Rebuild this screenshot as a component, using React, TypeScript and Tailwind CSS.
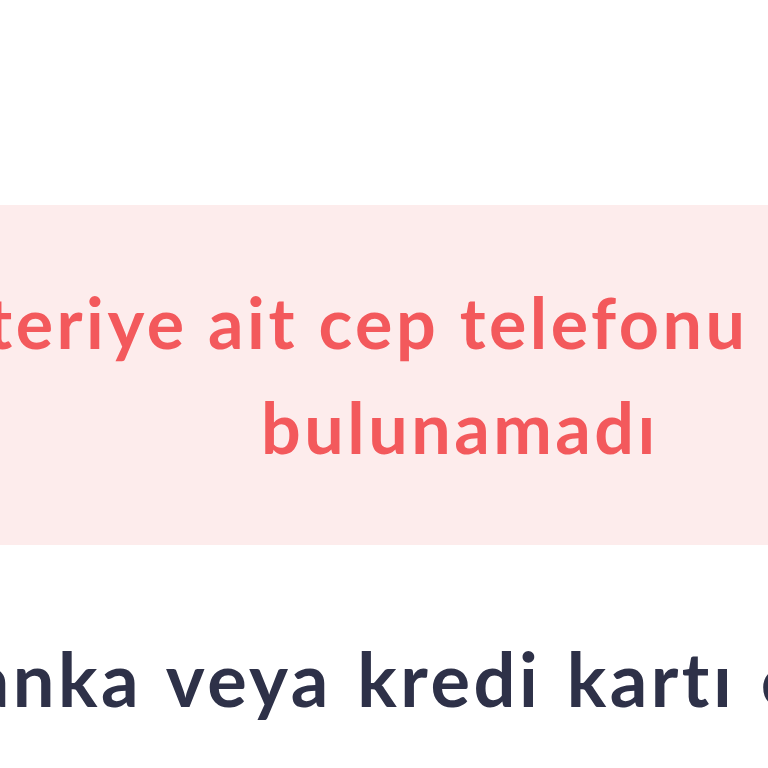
export default function App() {
  return (
    <div className="w-[768px] h-[768px] overflow-hidden bg-white flex flex-col font-['Lato','Liberation_Sans',sans-serif]">
      {/* error banner */}
      <div className="mt-[205px] h-[340px] shrink-0 bg-[#fdecec] flex items-center overflow-hidden">
        <p className="w-[1400px] shrink-0 ml-[-240px] text-center text-[70px] leading-[105px] font-bold text-[#f3595c] tracking-[3.5px]">
          Müşteriye ait cep telefonu numarası
          <br />
          bulunamadı
        </p>
      </div>

      {/* section heading */}
      <div className="mt-[89px] overflow-hidden">
        <h2 className="w-[1400px] ml-[-80px] text-[74px] leading-[90px] font-bold text-[#2e3148] tracking-[3.5px] [word-spacing:4px] whitespace-nowrap">
          Banka veya kredi kartı ekle
        </h2>
      </div>
    </div>
  );
}
